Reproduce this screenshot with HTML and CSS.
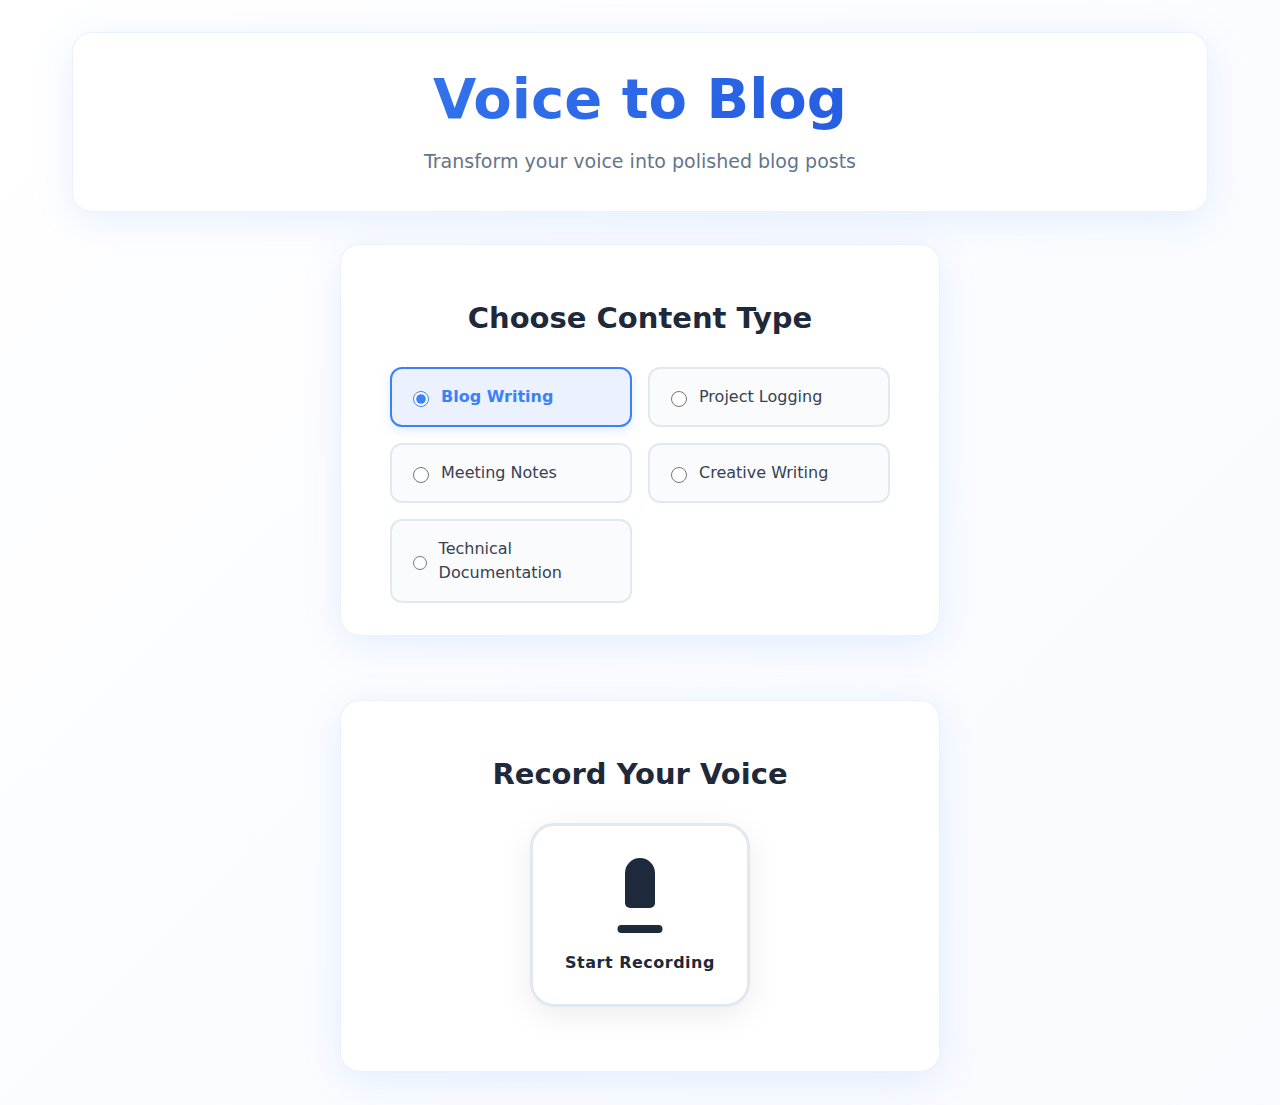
FILE: index.html
```html
<!DOCTYPE html>
<html lang="en">
<head>
<meta charset="utf-8">
<meta name="viewport" content="width=device-width, initial-scale=1">
<title>Voice to Blog</title>
<link rel="stylesheet" href="styles.css">
</head>
<body>
<div class="container">
  <header class="header">
    <h1 class="title">Voice to Blog</h1>
    <p class="subtitle">Transform your voice into polished blog posts</p>
  </header>
  <main class="main">
    <section class="card card-types">
      <h2 class="card-title">Choose Content Type</h2>
      <div class="options">
        <label class="option"><input type="radio" name="type" value="blog" checked><span>Blog Writing</span></label>
        <label class="option"><input type="radio" name="type" value="project"><span>Project Logging</span></label>
        <label class="option"><input type="radio" name="type" value="meeting"><span>Meeting Notes</span></label>
        <label class="option"><input type="radio" name="type" value="creative"><span>Creative Writing</span></label>
        <label class="option"><input type="radio" name="type" value="technical"><span>Technical Documentation</span></label>
      </div>
    </section>
    <section class="card card-record">
      <h2 class="card-title">Record Your Voice</h2>
      <button class="record" type="button">
        <svg class="mic" width="60" height="80" viewBox="0 0 60 80" aria-hidden="true">
          <path d="M15 15a15 15 0 0 1 30 0v30a5 5 0 0 1-5 5H20a5 5 0 0 1-5-5z"/>
          <rect x="7.5" y="67" width="45" height="8" rx="4"/>
        </svg>
        <span>Start Recording</span>
      </button>
    </section>
  </main>
</div>
</body>
</html>
```
FILE: styles.css
```css
* {
  box-sizing: border-box;
  margin: 0;
  padding: 0;
}

body {
  min-height: 100vh;
  font-family: "DejaVu Sans", sans-serif;
  line-height: 24px;
  color: #1e293b;
  background: linear-gradient(135deg, #ffffff 0%, #f8faff 100%);
}

.container {
  max-width: 1200px;
  margin: 0 auto;
  padding: 32px;
}

.header,
.card {
  background: #ffffff;
  border: 1px solid rgba(59, 130, 246, 0.1);
  border-radius: 20px;
  box-shadow: 0 8px 40px rgba(59, 130, 246, 0.12);
}

.header {
  margin-bottom: 32px;
  padding: 32px;
  text-align: center;
}

.title {
  margin-bottom: 12px;
  font-size: 56px;
  line-height: 67px;
  font-weight: 700;
  color: transparent;
  background: linear-gradient(135deg, #3b82f6, #1d4ed8);
  background-clip: text;
}

.subtitle {
  font-size: 19px;
  line-height: 35px;
  color: #64748b;
}

.main {
  display: flex;
  flex-direction: column;
  align-items: center;
  gap: 64px;
}

.card {
  width: 100%;
  max-width: 600px;
}

.card-types {
  padding: 48px 48px 32px;
}

.card-record {
  display: flex;
  flex-direction: column;
  align-items: center;
  padding: 48px 48px 64px;
}

.card-title {
  margin-bottom: 24px;
  font-size: 29px;
  line-height: 50px;
  font-weight: 600;
  text-align: center;
}

.options {
  display: grid;
  grid-template-columns: repeat(2, 1fr);
  gap: 16px;
  max-width: 500px;
  margin: 0 auto;
}

.option {
  display: flex;
  align-items: center;
  padding: 16px 20px;
  border: 2px solid #e2e8f0;
  border-radius: 12px;
  background: #fafbfd;
  color: #374151;
  cursor: pointer;
}

.option input {
  width: 16px;
  height: 16px;
  margin: 4px 12px 0 1px;
  accent-color: #3b82f6;
}

.option:has(input:checked) {
  border-color: #3b82f6;
  background: #ebf1fe;
  color: #3b82f6;
  font-weight: 600;
  box-shadow: 0 4px 12px rgba(59, 130, 246, 0.15);
}

.record {
  display: flex;
  flex-direction: column;
  align-items: center;
  gap: 16px;
  padding: 32px;
  border: 3px solid #e2e8f0;
  border-radius: 24px;
  background: #ffffff;
  box-shadow: 0 8px 32px rgba(0, 0, 0, 0.08);
  color: #1e293b;
  font: 600 16px/18px "DejaVu Sans", sans-serif;
  letter-spacing: 0.5px;
  cursor: pointer;
}

.mic {
  fill: currentColor;
}
```
